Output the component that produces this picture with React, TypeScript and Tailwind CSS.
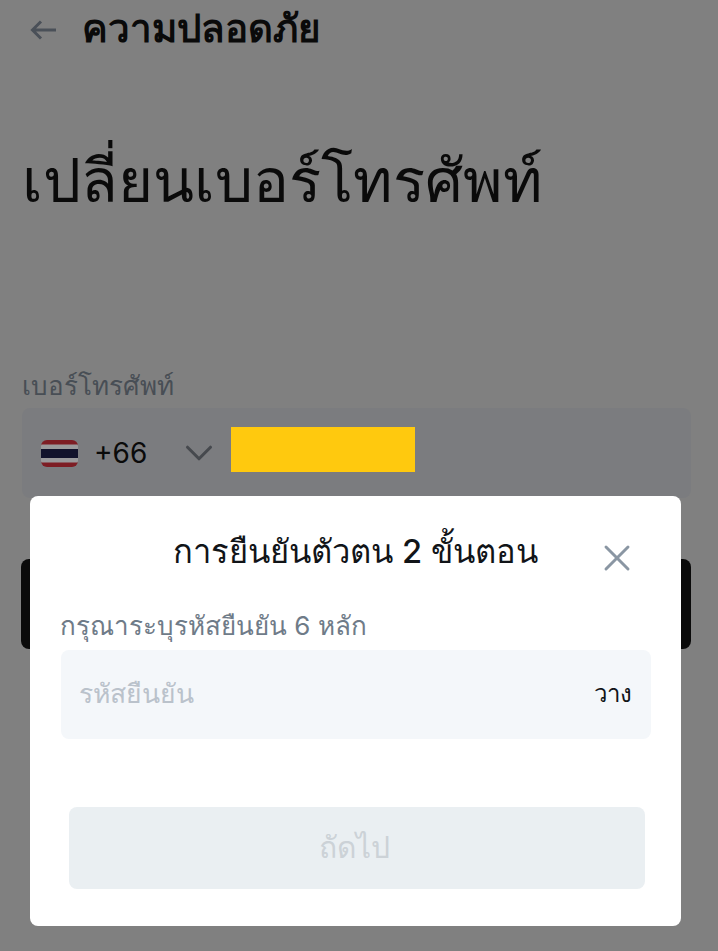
import { ChevronDown, X } from "lucide-react";

function ThaiFlag() {
  return (
    <svg width="37" height="27" viewBox="0 0 37 27" className="shrink-0">
      <defs>
        <clipPath id="flag-clip">
          <rect width="37" height="27" rx="6" />
        </clipPath>
      </defs>
      <g clipPath="url(#flag-clip)">
        <rect width="37" height="27" fill="#7d1d24" />
        <rect y="4.5" width="37" height="18" fill="#9a9a9c" />
        <rect y="9" width="37" height="9" fill="#12132c" />
      </g>
    </svg>
  );
}

function BackArrow() {
  return (
    <svg width="27" height="20" viewBox="0 0 27 20" fill="none" stroke="#4a5058" strokeWidth="3" className="shrink-0">
      <path d="M26 10H3M11 1.5L2.5 10l8.5 8.5" />
    </svg>
  );
}

export default function App() {
  return (
    <div className="relative h-[951px] w-[718px] overflow-hidden bg-[#808080] font-['Inter','Noto_Sans','Noto_Sans_CJK_SC',sans-serif]">
      {/* Page behind the dialog */}
      <div className="flex h-[60px] items-center gap-[25px] pl-[30px]">
        <BackArrow />
        <h1 className="mb-[2px] text-[38.5px] font-bold text-[#0a0a0a]">ความปลอดภัย</h1>
      </div>

      <h2 className="mt-[78px] pl-[22px] text-[60px] leading-[84px] text-[#0a0a0a]">เปลี่ยนเบอร์โทรศัพท์</h2>

      <p className="mt-[146px] pl-[22px] text-[26px] leading-[36px] text-[#484e55]">เบอร์โทรศัพท์</p>

      <div className="ml-[22px] mr-[27px] mt-[4px] flex h-[90px] items-center rounded-[8px] bg-[#7b7c7f] pl-[19px]">
        <ThaiFlag />
        <span className="ml-[16px] text-[28px] text-[#0a0a0a]">+66</span>
        <ChevronDown className="ml-[29px] h-[46px] w-[46px] text-[#46494e]" strokeWidth={1.6} />
        <div className="mb-[7px] ml-[9px] h-[45px] w-[184px] bg-[#ffc90e]" />
      </div>

      <div className="ml-[21px] mr-[27px] mt-[61px] h-[90px] rounded-[8px] bg-[#0a0a0a]" />

      {/* Dialog */}
      <div className="absolute left-[30px] top-[496px] flex h-[430px] w-[651px] flex-col rounded-[8px] bg-white px-[30px]">
        <div className="relative flex h-[112px] justify-center pt-[30px]">
          <h3 className="text-[32.7px] leading-[50px] text-[#111418]">
            การยืนยันตัวตน <span className="font-medium">2</span> ขั้นตอน
          </h3>
          <X className="absolute right-[12px] top-[40px] h-[44px] w-[44px] text-[#8a96a3]" strokeWidth={1.6} />
        </div>

        <p className="text-[26px] leading-[36px] text-[#6f7b88]">กรุณาระบุรหัสยืนยัน 6 หลัก</p>

        <div className="ml-[1px] mt-[6px] flex h-[89px] items-center justify-between rounded-[8px] bg-[#f4f7fa] pl-[18px] pr-[19px]">
          <span className="mb-[2px] text-[26.5px] text-[#bac2cb]">รหัสยืนยัน</span>
          <span className="mb-[2px] text-[24px] text-[#111418]">วาง</span>
        </div>

        <button className="ml-[9px] mr-[6px] mt-[68px] flex h-[82px] items-center justify-center rounded-[8px] bg-[#eaeff2] pb-[2px] pr-[6px] text-[30px] text-[#ccd2d7]">
          ถัดไป
        </button>
      </div>
    </div>
  );
}
